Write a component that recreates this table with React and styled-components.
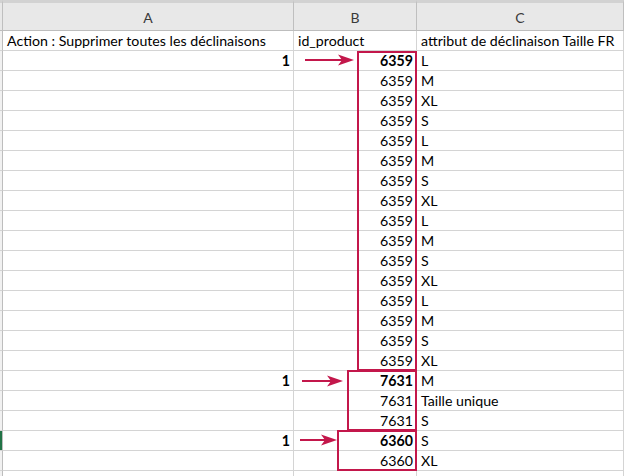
import styled, { createGlobalStyle } from "styled-components"

const GlobalStyle = createGlobalStyle`
  body {
    margin: 0;
    background: #fff;
    font-family: Lato, "Liberation Sans", sans-serif;
  }
`

const Sheet = styled.div`
  position: relative;
  width: 624px;
  height: 476px;
  overflow: hidden;
  background: #fff;
`

const Grid = styled.div`
  display: grid;
  grid-template-columns: 3px 291px 123px 207px;
  grid-template-rows: 31px;
  grid-auto-rows: 20px;
`

const ColHead = styled.div`
  box-sizing: border-box;
  border-top: 3px solid #d2d2d2;
  border-right: 1px solid #bfbfbf;
  border-bottom: 1px solid #bdbdbd;
  background: #e8e8e8;
  color: #3a3a3a;
  font-size: 14px;
  display: flex;
  align-items: center;
  justify-content: center;
  padding-top: 2px;
`

const RowHead = styled.div`
  box-sizing: border-box;
  border-right: 1px solid #bdbdbd;
  border-bottom: 1px solid #d4d4d4;
  background: ${p => (p.$active ? "#217346" : "#f1f1f1")};
`

const Cell = styled.div`
  box-sizing: border-box;
  border-right: 1px solid #d4d4d4;
  border-bottom: 1px solid #d4d4d4;
  padding: 0 3px 0 4px;
  font-size: 14.2px;
  line-height: 20px;
  color: #000;
  white-space: nowrap;
  overflow: hidden;
  text-align: ${p => (p.$num ? "right" : "left")};
  font-weight: ${p => (p.$bold ? 700 : 400)};
`

const Frame = styled.div`
  position: absolute;
  box-sizing: border-box;
  border: 2px solid #c3174b;
`

const ArrowSvg = styled.svg`
  position: absolute;
  overflow: visible;
`

const Arrow = ({ x1, x2, y }) => {
  const w = x2 - x1
  return (
    <ArrowSvg style={{ left: x1, top: y - 6, width: w, height: 12 }}>
      <line x1="0" y1="6" x2={w - 12} y2="6" stroke="#c3174b" strokeWidth="2" />
      <polygon points={`${w - 16},0.5 ${w},6 ${w - 16},11.5 ${w - 12},6`} fill="#c3174b" />
    </ArrowSvg>
  )
}

const sizes6359 = ["L", "M", "XL", "S", "L", "M", "S", "XL", "L", "M", "S", "XL", "L", "M", "S", "XL"]

const rows = [
  ...sizes6359.map((s, i) => ({ id: "6359", size: s, first: i === 0 })),
  ...["M", "Taille unique", "S"].map((s, i) => ({ id: "7631", size: s, first: i === 0 })),
  ...["S", "XL"].map((s, i) => ({ id: "6360", size: s, first: i === 0, active: i === 0 })),
  { id: "", size: "" },
]

const frames = [
  { left: 357, top: 51, width: 60, height: 320 },
  { left: 347, top: 370, width: 70, height: 61 },
  { left: 337, top: 430, width: 80, height: 41 },
]

const arrows = [
  { x1: 305, x2: 354, y: 60 },
  { x1: 302, x2: 343, y: 381 },
  { x1: 300, x2: 337, y: 440 },
]

export default function App() {
  return (
    <Sheet>
      <GlobalStyle />
      <Grid>
        <ColHead />
        <ColHead>A</ColHead>
        <ColHead>B</ColHead>
        <ColHead>C</ColHead>

        <RowHead />
        <Cell>Action : Supprimer toutes les déclinaisons</Cell>
        <Cell>id_product</Cell>
        <Cell>attribut de déclinaison Taille FR</Cell>

        {rows.map((r, i) => [
          <RowHead key={`h${i}`} $active={r.active} />,
          <Cell key={`a${i}`} $num $bold>{r.first ? "1" : ""}</Cell>,
          <Cell key={`b${i}`} $num $bold={r.first}>{r.id}</Cell>,
          <Cell key={`c${i}`}>{r.size}</Cell>,
        ])}
      </Grid>

      {frames.map((f, i) => (
        <Frame key={i} style={f} />
      ))}
      {arrows.map((a, i) => (
        <Arrow key={i} {...a} />
      ))}
    </Sheet>
  )
}
